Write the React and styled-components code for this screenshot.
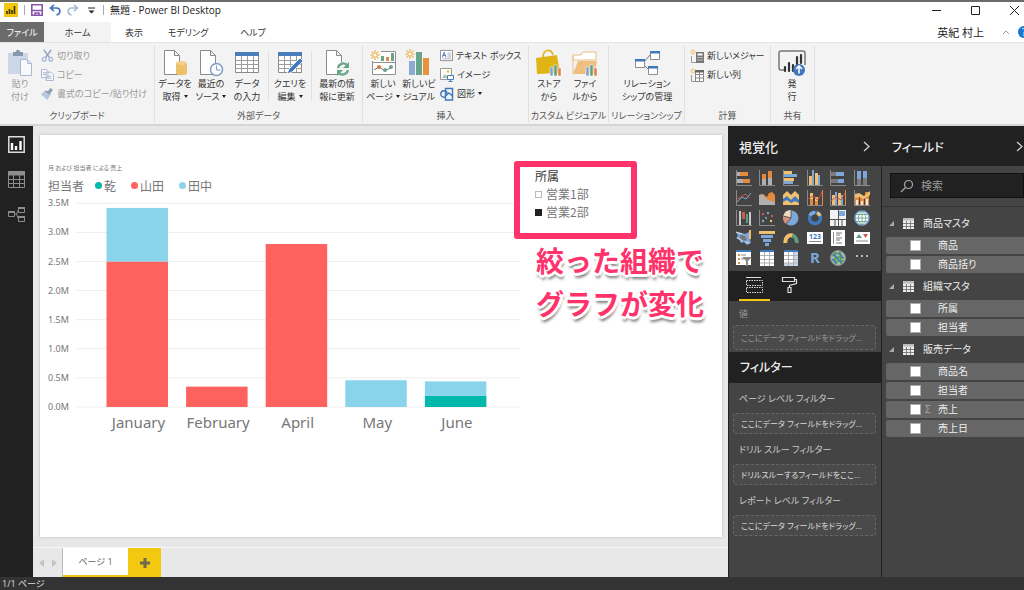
import React from 'react'
import styled, { createGlobalStyle } from 'styled-components'

const monthly = [
  { month: "January", inui: 0, yamada: 2.5, tanaka: 0.92 },
  { month: "February", inui: 0, yamada: 0.35, tanaka: 0 },
  { month: "April", inui: 0, yamada: 2.8, tanaka: 0 },
  { month: "May", inui: 0, yamada: 0, tanaka: 0.46 },
  { month: "June", inui: 0.19, yamada: 0, tanaka: 0.25 },
];

const series = [
  { key: "inui", name: "乾", color: "#01b8aa" },
  { key: "yamada", name: "山田", color: "#fd625e" },
  { key: "tanaka", name: "田中", color: "#8ad4eb" },
];

const tables = [
  { name: "商品マスタ", fields: [{ name: "商品" }, { name: "商品括り" }] },
  { name: "組織マスタ", fields: [{ name: "所属" }, { name: "担当者" }] },
  { name: "販売データ", fields: [{ name: "商品名" }, { name: "担当者" }, { name: "売上", sum: true }, { name: "売上日" }] },
];

const Svg = ({ w = 16, h = w, box, children }) => (
  <svg width={w} height={h} viewBox={box || `0 0 ${w} ${h}`} fill="none" aria-hidden="true">{children}</svg>
);

/* ---------- ribbon icons ---------- */
const Doc = ({ stroke = "#8a8a8a" }) => (
  <path d="M3.5 1.5h10l5 5v19h-15zM13.5 1.5v5h5" fill="#fff" stroke={stroke} />
);

const Sun = () => (
  <g stroke="#eeb75a" strokeWidth="1.2">
    <circle cx="5" cy="5" r="2.2" fill="#fff" />
    <path d="M5 0v2M5 8v2M0 5h2M8 5h2M1.5 1.5l1.4 1.4M7.1 7.1l1.4 1.4M8.5 1.5L7.1 2.9M1.5 8.5l1.4-1.4" />
  </g>
);

const PasteIcon = () => (
  <Svg w={28}>
    <path d="M2 4h20v21H2z" fill="#cdd7e8" />
    <path d="M7 7V3h3c0-3 4-3 4 0h3v4z" fill="#8797b0" />
    <path d="M14.500 10.500h7l4 4v12h-11zM21.500 10.500v4h4" fill="#f7f9fc" stroke="#a9b9d2" />
  </Svg>
);

const GetDataIcon = () => (
  <Svg w={28}>
    <Doc />
    <path d="M15 14v10c0 3 11 3 11 0V14z" fill="#eec06a" />
    <ellipse cx="20.500" cy="14" rx="5.500" ry="2" fill="#f4d08d" />
  </Svg>
);

const RecentIcon = () => (
  <Svg w={28}>
    <Doc />
    <circle cx="19.500" cy="20.500" r="6" fill="#fff" stroke="#7f9cc4" strokeWidth="1.500" />
    <path d="M19.500 16.500v4.500h4" stroke="#7f9cc4" />
  </Svg>
);

const GridIcon = ({ edit }) => (
  <Svg w={28}>
    <path d="M2.500 3.500h23v20h-23z" fill="#fff" stroke="#8a8a8a" />
    <path d="M2 3h24v4H2z" fill="#4a7ebb" />
    <path d="M2 11.500h24M2 15.500h24M2 19.500h24M8.500 7v16M14.500 7v16M20.500 7v16" stroke="#9c9c9c" />
    {edit && <path d="M11 25l2-5 11-11 3 3-11 11z" fill="#3f78bd" stroke="#fff" strokeWidth=".8" />}
  </Svg>
);

const RefreshIcon = () => (
  <Svg w={28}>
    <Doc />
    <circle cx="20" cy="20" r="7" fill="#f3f3f3" />
    <path d="M15 19c1-5 7-6 9.500-2.500M25 21c-1 5-7 6-9.500 2.500" stroke="#6aa58a" strokeWidth="2.200" />
    <path d="M26 13v6h-6zM14 27v-6h6z" fill="#6aa58a" />
  </Svg>
);

const NewPageIcon = () => (
  <Svg w={28}>
    <path d="M3.500 2.500h23v23h-23zM3.500 13.500h23" fill="#fff" stroke="#8f8f8f" />
    <path d="M12 7h3v5h-3zM22 4h3v8h-3z" fill="#6aa58a" />
    <path d="M17 8h3v4h-3z" fill="#e58a43" />
    <path d="M5 21l5-3 6 4 7-4" stroke="#777" />
    <circle cx="10" cy="18" r="2" fill="#e0703c" />
    <circle cx="16" cy="21" r="2" fill="#6aa58a" />
    <circle cx="22" cy="18" r="2" fill="#6aa58a" />
    <path d="M1 1h11v11H1z" fill="#f8f8f8" />
    <g transform="translate(1 1)"><Sun /></g>
  </Svg>
);

const NewVisualIcon = () => (
  <Svg w={28}>
    <path d="M4 12h6v14H4z" fill="#8cabd3" />
    <path d="M11 3h6v23h-6z" fill="#6aa58a" />
    <path d="M18 9h6v17h-6z" fill="#e8913f" />
    <Sun />
  </Svg>
);

const MiniBars = () => (
  <g>
    <path d="M15 18h3v9h-3z" fill="#7ba2d4" stroke="#fff" strokeWidth=".5" />
    <path d="M19 16h3v11h-3z" fill="#5f9c80" stroke="#fff" strokeWidth=".5" />
    <path d="M23 19h3v8h-3z" fill="#e0803c" stroke="#fff" strokeWidth=".5" />
  </g>
);

const StoreIcon = () => (
  <Svg w={28}>
    <path d="M8 9c0-9 8-10 10-3" stroke="#e0b51c" strokeWidth="1.600" />
    <path d="M1 9l21-3 3 18-23 1z" fill="#dfb515" />
    <MiniBars />
  </Svg>
);

const FolderIcon = () => (
  <Svg w={28}>
    <path d="M2 6h8l2-3h13v8H2z" fill="#fff" stroke="#e9bf83" />
    <path d="M2 25l5-13h19l-3 13z" fill="#eebf7e" />
    <path d="M2 7v18" stroke="#e9bf83" />
    <MiniBars />
  </Svg>
);

const RelationIcon = () => (
  <Svg w={28}>
    <path d="M11 13l6-7M11 16l6 6" stroke="#777" />
    <path d="M17.500 2.500h9v8h-9zM2.500 10.500h9v8h-9zM15.500 17.500h9v8h-9z" fill="#fff" stroke="#8c8c8c" />
    <path d="M17 2h10v2.500H17zM2 10h10v2.500H2zM15 17h10v2.500H15z" fill="#3f78bd" />
  </Svg>
);

const PublishIcon = () => (
  <Svg w={28}>
    <path d="M6 21H3c-1.500 0-2-1-2-2V4c0-1 .5-2 2-2h22c1.500 0 2 1 2 2v12" stroke="#777" strokeWidth="1.500" />
    <path d="M7 18v4M11 14v8M15 16v6M19 8v9M23 6v8" stroke="#333" strokeWidth="2.200" strokeLinecap="round" />
    <circle cx="21" cy="21" r="6" fill="#3f78bd" />
    <path d="M21 24.500v-7M18 20l3-3 3 3" stroke="#fff" strokeWidth="1.600" />
  </Svg>
);

const CutIcon = () => (
  <Svg w={13} box="0 0 14 14">
    <path d="M3 1l6 8M11 1L5 9" stroke="#8f9fb8" strokeWidth="1.600" />
    <circle cx="3.500" cy="11" r="2" stroke="#a9bddb" strokeWidth="1.500" />
    <circle cx="10.500" cy="11" r="2" stroke="#a9bddb" strokeWidth="1.500" />
  </Svg>
);

const CopyIcon = () => (
  <Svg w={13} box="0 0 14 14">
    <path d="M.5 1.500h5l2 2v7h-7zM5.500 4.500h5l3 3v6h-8z" fill="#f5f7fb" stroke="#a3b3cc" />
    <path d="M2 5h3M2 7h3M7 9h4M7 11h4" stroke="#a3b3cc" />
  </Svg>
);

const PainterIcon = () => (
  <Svg w={13} box="0 0 14 14">
    <path d="M10 1l3 2-3 4-3-2z" fill="#8f9fb8" />
    <path d="M4 4l6 5-3 5-7-6z" fill="#b7c7df" />
    <path d="M5 4l5 4" stroke="#8090ab" strokeWidth="1.500" />
  </Svg>
);

const TextBoxIcon = () => (
  <Svg w={13} box="0 0 14 14">
    <path d="M.5 1.500h13v11H.5z" fill="#fff" stroke="#8a8a8a" />
    <path d="M2.500 9l2-5.500L6.500 9M3 7h3" stroke="#3f78bd" />
    <path d="M8 4.500h4M8 6.500h4M8 8.500h4M3 10.500h9" stroke="#999" strokeWidth=".8" />
  </Svg>
);

const ImageIcon = () => (
  <Svg w={14} box="0 0 14 14">
    <path d="M.5.5h11v11H.5z" fill="#fff" stroke="#999" />
    <path d="M2 10l3-4 3 4z" fill="#a9c4a5" />
    <circle cx="8" cy="3.500" r="1.300" fill="#eeb75a" />
    <path d="M7.500 7.500h6v4h-6zM10.500 12v1.500M8.500 13.500h4" fill="#fff" stroke="#4a7ebb" />
  </Svg>
);

const ShapesIcon = () => (
  <Svg w={14} box="0 0 14 14">
    <path d="M5.500 1.500h7v7h-7z" stroke="#3f78bd" strokeWidth="1.400" />
    <circle cx="4" cy="7" r="3.200" stroke="#3f78bd" strokeWidth="1.400" />
    <path d="M9 6l3.500 3v4h-7V9z" fill="#f3f3f3" stroke="#3f78bd" strokeWidth="1.400" />
  </Svg>
);

const MeasureIcon = ({ column }) => (
  <Svg w={14}>
    <g transform="scale(.6)"><Sun /></g>
    <path d="M1.500 7v6.500h5" stroke="#999" />
    {column
      ? <g><path d="M5.500 2.500h8v11h-8zM5.500 6.500h8M5.500 10h8M9.500 4v9" fill="#fff" stroke="#888" /><path d="M5 2h9v2.500H5z" fill="#666" /></g>
      : <g><path d="M6 3h8v11H6z" fill="#777" /><path d="M7.500 4.500h5v2h-5zM7.500 8h1v1h-1zM9.500 8h1v1h-1zM11.500 8h1v1h-1zM7.500 10.500h1v1h-1zM9.500 10.500h1v1h-1zM11.500 10.500h1v1h-1z" fill="#fff" /></g>}
  </Svg>
);

/* ---------- visualization gallery ---------- */
const O = "#e58a3c", B = "#7da7d9", Y = "#f0c070", G = "#b0b0b0", A = "#8a8a8a";
const axis = <path d="M.5 0v15.500H16" stroke={A} />;

const visuals = [
  ["積み上げ横棒グラフ", <g>{axis}<path d="M1 2h5v4H1zM1 9h7v4H1z" fill={G} /><path d="M4 2h8v4H4zM7 9h7v4H7z" fill={O} /></g>],
  ["積み上げ縦棒グラフ", <g>{axis}<path d="M3 9h4v6H3zM9 8h4v7H9z" fill={G} /><path d="M3 4h4v5H3zM9 1h4v7H9z" fill={O} /></g>],
  ["集合横棒グラフ", <g>{axis}<path d="M1 1h8v3H1zM1 8h10v3H1z" fill={Y} /><path d="M1 4h13v3H1zM1 11h9v3H1z" fill={B} /></g>],
  ["集合縦棒グラフ", <g>{axis}<path d="M2 6h3v9H2zM8 3h3v12H8z" fill={Y} /><path d="M5 0h2v15H5zM11 5h2v10h-2z" fill={B} /></g>],
  ["100% 積み上げ横棒グラフ", <g>{axis}<path d="M1 2h5v4H1zM1 9h7v4H1z" fill="#7b7b7b" /><path d="M6 2h8v4H6zM8 9h6v4H8z" fill={B} /></g>],
  ["100% 積み上げ縦棒グラフ", <g>{axis}<path d="M3 9h4v6H3zM9 8h4v7H9z" fill="#7b7b7b" /><path d="M3 1h4v8H3zM9 1h4v7H9z" fill={B} /></g>],
  ["折れ線グラフ", <g>{axis}<path d="M1 12l5-5 4 2 5-6" stroke={B} /><path d="M1 9l4-2 4-3 5 4" stroke="#c75c4a" /></g>],
  ["面グラフ", <g><path d="M0 15V6l4-2 4 3 2-4 3-1 3 3v10z" fill={O} /><path d="M0 15V5l3-1 6 6 7 2v3z" fill={G} /></g>],
  ["積み上げ面グラフ", <g><path d="M0 15V5l4-4 4 4 4-4 4 4v10z" fill={Y} /><path d="M0 15V9l4-3 4 4 4-4 4 4v5z" fill="#3f78bd" /><path d="M0 15v-3l4-2 4 3 4-2 4 2v2z" fill={Y} /></g>],
  ["折れ線および積み上げ縦棒グラフ", <g>{axis}<path d="M3 3h3v12H3zM8 7h3v8H8z" fill={Y} /><path d="M3 9h3v6H3zM8 11h3v4H8z" fill={O} /><path d="M1 9l5-3 5 4 4-8" stroke="#d0503c" /><path d="M15.500 0v15" stroke={O} /></g>],
  ["折れ線および集合縦棒グラフ", <g>{axis}<path d="M2 5h3v10H2zM8 3h3v12H8z" fill={Y} /><path d="M5 2h2v13H5zM11 5h2v10h-2z" fill={B} /><path d="M1 11l5-4 5 3 4-7" stroke="#d0503c" /><path d="M15.500 0v15" stroke={O} /></g>],
  ["リボン グラフ", <g>{axis}<path d="M1 4h4v11H1zM6 6h4v9H6zM11 2h4v13h-4z" fill={O} /><path d="M1 4l4-1 5 3 6-5v4l-6 4-5-2-4 1z" fill={Y} /><path d="M2 10h2v5H2zM7 11h2v4H7zM12 9h2v6h-2z" fill="#e8e8e8" /></g>],
  ["ウォーターフォール図", <g>{axis}<path d="M3 1h2v14H3zM13 2h2v13h-2z" fill="#c9c9c9" /><path d="M6 2h3v7H6z" fill="#c75c4a" /><path d="M10 4h2v9h-2z" fill="#5f9c80" /></g>],
  ["散布図", <g>{axis}<circle cx="4" cy="4" r="1.200" fill="#c75c4a" /><circle cx="9" cy="3" r="1.200" fill={B} /><circle cx="7" cy="8" r="1.200" fill="#5f9c80" /><circle cx="13" cy="6" r="1.200" fill="#c75c4a" /><circle cx="12" cy="11" r="1.200" fill={Y} /><circle cx="4" cy="11" r="1.200" fill={B} /></g>],
  ["円グラフ", <g><circle cx="8" cy="8" r="7.500" fill={B} /><path d="M8 8V0a8 8 0 0 0-7.800 6z" fill="#f1dcc0" /><path d="M8 8L.2 6a8 8 0 0 0 3 8.300z" fill="#d98f7f" /><path d="M8 .5V8L3 14M8 8L.5 6" stroke="#444" strokeWidth=".8" /></g>],
  ["ドーナツ グラフ", <g strokeWidth="3.500"><circle cx="8" cy="8" r="5.500" stroke="#3f78bd" /><path d="M3 5.500A5.500 5.500 0 0 1 8 2.500" stroke={B} /><path d="M10 2.800a5.500 5.500 0 0 1 3 3" stroke={Y} /></g>],
  ["ツリーマップ", <g><path d="M0 0h16v16H0z" fill="#f2f2f2" /><path d="M9 1h6v5H9z" fill={B} /><path d="M8.500 0v16M0 9.500h16M5 10v6M12 10v6" stroke="#555" /></g>],
  ["マップ", <g><circle cx="8" cy="8" r="7" fill="#fff" stroke={B} strokeWidth="1.500" /><path d="M8 1v14M1 8h14M2.500 4.500h11M2.500 11.500h11M8 1C3 5 3 11 8 15M8 1c5 4 5 10 0 14" stroke="#5f9c80" strokeWidth=".8" /></g>],
  ["塗り分け地図", <g><path d="M0 2l6 1 3 1 4-2v4l2 1-1 3 1 3-4 2-3-3-3 1-2-4-3-1 2-2z" fill={B} /><path d="M4 5l5 1 2 4-4 1-3-3z" fill="#777" /><path d="M13 0h2v9h-2z" fill={Y} /><path d="M0 2l6 2M1 8l6 3M9 12l4 1" stroke="#ddd" /></g>],
  ["じょうご", <g fill={B}><path d="M0 1h16v3H0z" fill={Y} /><path d="M2 5h12v3H2zM4 9h8v3H4zM6 13h4v3H6z" /></g>],
  ["ゲージ", <g strokeWidth="4"><path d="M2.500 13a5.500 6.500 0 0 1 7-7.500" stroke={Y} /><path d="M9.500 5.500a6 6.500 0 0 1 4 7.500" stroke="#5f9c80" /></g>],
  ["カード", <g><path d="M0 2h16v12H0z" fill="#fff" /><text x="8" y="9" fontSize="7" fontWeight="700" textAnchor="middle" fill="#3f78bd">123</text><path d="M2 11.500h12" stroke={A} /></g>],
  ["複数の行カード", <g><path d="M1 0h14v16H1z" fill="#fff" /><path d="M3.500 2v12" stroke={A} /><path d="M6 3h6M6 5h4M6 8h6M6 10h4M6 13h6" stroke="#777" /></g>],
  ["KPI", <g><path d="M0 2h16v12H0z" fill="#fff" /><path d="M2 8l3-4 3 4z" fill="#5f9c80" /><path d="M9 4h5l-2.500 4z" fill="#c75c4a" /><path d="M2 11h12" stroke={A} /></g>],
  ["スライサー", <g><path d="M0 1h15v14H0z" fill="#fff" /><path d="M0 0h15v2H0z" fill="#3f78bd" /><path d="M2 4h2v2H2zM2 8h2v2H2zM2 12h2v2H2z" fill={O} /><path d="M5 5h5M5 9h3" stroke={A} /><path d="M6 7h10l-4 4v5h-2v-5z" fill="#888" /></g>],
  ["テーブル", <g><path d="M1 0h14v16H1z" fill="#fff" /><path d="M1 0h14v2H1z" fill="#3f78bd" /><path d="M1 5.500h14M1 9.500h14M1 13h14M5.500 2v14M10.500 2v14" stroke={G} /></g>],
  ["マトリックス", <g><path d="M1 0h14v16H1z" fill="#fff" /><path d="M1 0h14v2H1z" fill="#3f78bd" /><path d="M11 2h4v14h-4zM1 13h14v3H1z" fill="#c8d8ec" /><path d="M1 5.500h14M1 9.500h14M1 13h14M5.500 2v14M10.500 2v14" stroke={G} /></g>],
  ["R スクリプト ビジュアル", <text x="8" y="13" fontSize="15" fontWeight="700" textAnchor="middle" fill={B}>R</text>],
  ["ArcGIS Maps", <g><circle cx="8" cy="8" r="7.500" fill="#9dbfae" stroke="#8a8a8a" /><path d="M2 6l4-3 4 1M3 10l5-3 6 1M5 14l5-4 4 1M5 2l1 12M10 1l1 13" stroke="#5f9c50" strokeWidth="1.500" /><path d="M3 4l9 9M9 3l4 5M2 9l4 4" stroke="#3f78bd" strokeWidth="1.500" /></g>],
  ["カスタム ビジュアルのインポート", <path d="M2 6h2M7 6h2M12 6h2" stroke="#ddd" strokeWidth="1.600" />],
];

const BigButton = ({ icon, lines, arrow, width = 36, muted }) => (
  <Big $width={width} $muted={muted} type="button">
    {icon}
    <span>{lines[0]}</span>
    <span>{lines[1]}{arrow && <Arrow />}</span>
  </Big>
);

const RibbonGroup = ({ title, width, children }) => (
  <Group $width={width}>
    <GroupBody>{children}</GroupBody>
    <GroupTitle>{title}</GroupTitle>
  </Group>
);

const Header = () => (
  <header>
    <TitleBar>
      <Svg w={14}>
        <path d="M0 0h14v14H0z" fill="#f2c811" />
        <path d="M3 8v3M5.500 6v5M8 7v4M10.500 3v8" stroke="#3a3000" strokeWidth="1.600" />
      </Svg>
      <Rule />
      <QuickButton aria-label="保存">
        <Svg w={12}><path d="M.8.8h10.400v10.400H.8z" stroke="#8a55a8" strokeWidth="1.600" /><path d="M1 6.500h10M4 11V9h4v2" stroke="#8a55a8" strokeWidth="1.500" /></Svg>
      </QuickButton>
      <QuickButton aria-label="元に戻す">
        <Svg w={12}><path d="M1.500 4h6c4.500 0 4.500 6 0 7M5 .8L1.500 4 5 7.200" stroke="#3e73b8" strokeWidth="1.600" /></Svg>
      </QuickButton>
      <QuickButton aria-label="やり直し">
        <Svg w={12}><path d="M10.500 4h-6c-4.500 0-4.500 6 0 7M7 .8L10.500 4 7 7.200" stroke="#a9bcd6" strokeWidth="1.600" /></Svg>
      </QuickButton>
      <QuickButton aria-label="クイック アクセスのカスタマイズ">
        <Svg w={7}><path d="M0 1h7" stroke="#222" /><path d="M.5 3.500h6l-3 3z" fill="#222" /></Svg>
      </QuickButton>
      <Rule />
      <AppTitle>無題 - Power BI Desktop</AppTitle>
      <WindowButtons>
        <button type="button" aria-label="最小化"><Svg w={11}><path d="M1 5.500h9" stroke="#222" /></Svg></button>
        <button type="button" aria-label="最大化"><Svg w={11}><path d="M1.500 1.500h8v8h-8z" stroke="#222" /></Svg></button>
        <button type="button" aria-label="閉じる"><Svg w={11}><path d="M1 1l9 9M10 1l-9 9" stroke="#222" /></Svg></button>
      </WindowButtons>
    </TitleBar>
    <TabBar>
      <FileTab type="button">ファイル</FileTab>
      <Tab $active $width={67} type="button">ホーム</Tab>
      <Tab $width={46} type="button">表示</Tab>
      <Tab $width={62} type="button">モデリング</Tab>
      <Tab $width={68} type="button">ヘルプ</Tab>
      <User>
        英紀 村上
        <Svg w={8} h={6}><path d="M1 5l3-3 3 3" stroke="#999" /></Svg>
        <Help type="button" aria-label="ヘルプ">?</Help>
      </User>
    </TabBar>
    <Ribbon>
      <RibbonGroup title="クリップボード" width={155}>
        <BigButton icon={<PasteIcon />} lines={["貼り", "付け"]} muted />
        <SmallList>
          <Small type="button" $muted><CutIcon />切り取り</Small>
          <Small type="button" $muted><CopyIcon />コピー</Small>
          <Small type="button" $muted><PainterIcon />書式のコピー/貼り付け</Small>
        </SmallList>
      </RibbonGroup>
      <RibbonGroup title="外部データ" width={208}>
        <BigButton icon={<GetDataIcon />} lines={["データを", "取得"]} arrow />
        <BigButton icon={<RecentIcon />} lines={["最近の", "ソース"]} arrow />
        <BigButton icon={<GridIcon />} lines={["データ", "の入力"]} />
        <Divider />
        <BigButton icon={<GridIcon edit />} lines={["クエリを", "編集"]} arrow />
        <Divider />
        <BigButton icon={<RefreshIcon />} lines={["最新の情", "報に更新"]} width={44} />
      </RibbonGroup>
      <RibbonGroup title="挿入" width={166}>
        <BigButton icon={<NewPageIcon />} lines={["新しい", "ページ"]} arrow />
        <BigButton icon={<NewVisualIcon />} lines={["新しいビ", "ジュアル"]} />
        <SmallList>
          <Small type="button"><TextBoxIcon />テキスト ボックス</Small>
          <Small type="button"><ImageIcon />イメージ</Small>
          <Small type="button"><ShapesIcon />図形<Arrow $tight /></Small>
        </SmallList>
      </RibbonGroup>
      <RibbonGroup title="カスタム ビジュアル" width={80}>
        <BigButton icon={<StoreIcon />} lines={["ストア", "から"]} />
        <BigButton icon={<FolderIcon />} lines={["ファイ", "ルから"]} />
      </RibbonGroup>
      <RibbonGroup title="リレーションシップ" width={76}>
        <BigButton icon={<RelationIcon />} lines={["リレーション", "シップの管理"]} width={72} />
      </RibbonGroup>
      <RibbonGroup title="計算" width={86}>
        <SmallList>
          <Small type="button"><MeasureIcon />新しいメジャー</Small>
          <Small type="button"><MeasureIcon column />新しい列</Small>
        </SmallList>
      </RibbonGroup>
      <RibbonGroup title="共有" width={44}>
        <BigButton icon={<PublishIcon />} lines={["発", "行"]} width={38} />
      </RibbonGroup>
    </Ribbon>
  </header>
);

const Chart = () => {
  const zero = 211;
  const unit = 58.2;
  const ticks = [0, 0.5, 1, 1.5, 2, 2.5, 3, 3.5];
  return (
    <ChartSvg viewBox="0 0 472 242" role="img" aria-label="月 および 担当者 による 売上">
      {ticks.map((t) => (
        <g key={t}>
          <path d={`M28 ${zero - t * unit}H472`} stroke="#eeeeee" />
          <text x="0" y={zero - t * unit + 3} fontSize="9" fill="#777">{t.toFixed(1)}M</text>
        </g>
      ))}
      {monthly.map((m, i) => {
        const x = 58.5 + i * 79.6;
        let top = zero;
        return (
          <g key={m.month}>
            {series.map((s) => {
              const height = m[s.key] * unit;
              top -= height;
              return <rect key={s.key} x={x} y={top} width="61.5" height={height} fill={s.color} />;
            })}
            <text x={x + 32} y={zero + 21} fontSize="15" textAnchor="middle" fill="#777">{m.month}</text>
          </g>
        );
      })}
    </ChartSvg>
  );
};

const Report = () => (
  <Canvas>
    <Page>
      <ChartVisual>
        <ChartTitle>月 および 担当者 による 売上</ChartTitle>
        <Legend>
          <dt>担当者</dt>
          {series.map((s) => <LegendItem key={s.key} $color={s.color}>{s.name}</LegendItem>)}
        </Legend>
        <Chart />
      </ChartVisual>
      <Side>
        <Slicer>
          <legend>所属</legend>
          <label><input type="checkbox" />営業1部</label>
          <label><input type="checkbox" defaultChecked />営業2部</label>
        </Slicer>
        <Callout>絞った組織で<br />グラフが変化</Callout>
      </Side>
    </Page>
    <PageTabs>
      <PageArrows>
        <button type="button" aria-label="前のページ"><Svg w={5} h={8}><path d="M5 0v8L0 4z" fill="#c3c3c3" /></Svg></button>
        <button type="button" aria-label="次のページ"><Svg w={5} h={8}><path d="M0 0v8l5-4z" fill="#c3c3c3" /></Svg></button>
      </PageArrows>
      <PageTab type="button">ページ 1</PageTab>
      <AddPage type="button" aria-label="新しいページ"><Svg w={10}><path d="M5 0v10M0 5h10" stroke="#6f6a4c" strokeWidth="3" /></Svg></AddPage>
    </PageTabs>
  </Canvas>
);

const Chevron = () => <Svg w={7} h={11}><path d="M1 1l5 4.500L1 10" stroke="#d0d0d0" strokeWidth="1.300" /></Svg>;

const VisualPane = () => (
  <Pane>
    <PaneHeader><h2>視覚化</h2><PaneToggle type="button" aria-label="折りたたむ"><Chevron /></PaneToggle></PaneHeader>
    <Gallery>
      {visuals.map(([name, art]) => (
        <button key={name} type="button" aria-label={name}><Svg w={16}>{art}</Svg></button>
      ))}
    </Gallery>
    <PaneTabs>
      <PaneTab $active type="button" aria-label="フィールド">
        <Svg w={19} h={18}>
          <path d="M1 1.500h15" stroke="#ddd" />
          <path d="M1.500 4.500h16v5h-16zM1.500 11.500h16v5h-16z" stroke="#ddd" strokeDasharray="1.500 1" />
        </Svg>
      </PaneTab>
      <PaneTab type="button" aria-label="書式">
        <Svg w={17} h={18}><path d="M1.500 1.500h12v4h-12zM13.500 3.500h2v4l-7 2v2M7 11.500h3v5H7z" stroke="#ddd" strokeWidth="1.200" /></Svg>
      </PaneTab>
    </PaneTabs>
    <Well>
      <WellLabel $muted>値</WellLabel>
      <Drop $muted>ここにデータ フィールドをドラッグ...</Drop>
    </Well>
    <FilterHeader>フィルター</FilterHeader>
    <Well>
      <WellLabel>ページ レベル フィルター</WellLabel>
      <Drop>ここにデータ フィールドをドラッグ...</Drop>
      <WellLabel>ドリル スルー フィルター</WellLabel>
      <Drop>ドリルスルーするフィールドをここ...</Drop>
      <WellLabel>レポート レベル フィルター</WellLabel>
      <Drop>ここにデータ フィールドをドラッグ...</Drop>
    </Well>
  </Pane>
);

const FieldPane = () => (
  <Pane>
    <PaneHeader $end><h2>フィールド</h2><PaneToggle type="button" aria-label="折りたたむ"><Chevron /></PaneToggle></PaneHeader>
    <SearchArea>
      <Search>
        <Svg w={14}><circle cx="8.500" cy="5.500" r="4" stroke="#aaa" strokeWidth="1.200" /><path d="M5.500 8.500L1 13" stroke="#aaa" strokeWidth="1.200" /></Svg>
        <input type="search" aria-label="検索" placeholder="検索" />
      </Search>
    </SearchArea>
    <Tables>
      {tables.map((t) => (
        <li key={t.name}>
          <TableName type="button">
            <Svg w={5}><path d="M5 0v5H0z" fill="#aaa" /></Svg>
            <Svg w={11}><path d="M0 0h11v11H0z" fill="#eee" /><path d="M0 0h11v2.500H0z" fill="#bbb" /><path d="M0 5.500h11M0 8.500h11M3.500 3v8M7.500 3v8" stroke="#666" strokeWidth=".8" /></Svg>
            {t.name}
          </TableName>
          <Fields>
            {t.fields.map((f) => (
              <Field key={f.name}>
                <label>
                  <input type="checkbox" />
                  <Sigma>{f.sum && "Σ"}</Sigma>
                  {f.name}
                </label>
              </Field>
            ))}
          </Fields>
        </li>
      ))}
    </Tables>
  </Pane>
);

const App = () => {
  return <Shell>
    <GlobalStyle />
    <Header />
    <Work>
      <Rail>
        <button type="button" aria-label="レポート"><Svg w={17}><path d="M.8.8h15.400v15.400H.8z" stroke="#ddd" strokeWidth="1.500" /><path d="M4 7v7M8 10v4M12.500 5v9" stroke="#fff" strokeWidth="2.400" /></Svg></button>
        <button type="button" aria-label="データ"><Svg w={17}><path d="M.5.5h16v16H.5zM.5 8.500h16M.5 12.500h16M5.500 4v12M11.500 4v12" stroke="#8d8d8d" /><path d="M0 0h17v4.500H0z" fill="#8d8d8d" /></Svg></button>
        <button type="button" aria-label="リレーションシップ"><Svg w={17}><path d="M.5 5.500h6v5h-6zM10.500 1.500h6v5h-6zM10.500 10.500h6v5h-6zM6.500 8h2M8.500 8l2-4M8.500 8l2 5" stroke="#8d8d8d" /><path d="M0 5h7v2H0zM10 1h7v2h-7zM10 10h7v2h-7z" fill="#8d8d8d" /></Svg></button>
      </Rail>
      <Report />
      <VisualPane />
      <FieldPane />
    </Work>
    <Status>1/1 ページ</Status>
  </Shell>
};

const GlobalStyle = createGlobalStyle`
  * { box-sizing: border-box; }
  body {
    margin: 0;
    font-family: "Open Sans", "Noto Sans CJK JP", sans-serif;
    font-feature-settings: "palt";
    font-size: 9px;
    line-height: 13px;
  }
  button {
    padding: 0;
    border: 0;
    background: none;
    color: inherit;
    font: inherit;
    font-feature-settings: inherit;
    white-space: nowrap;
  }
  svg { display: block; flex: none; }
  h2, dl, ul, p { margin: 0; padding: 0; list-style: none; }
`;

const Shell = styled.div`
  display: flex;
  flex-direction: column;
  min-height: 100vh;
  overflow: hidden;
  border-top: 2px solid #6d6a6a;
  background: #fff;
  color: #333;
`;

const TitleBar = styled.div`
  display: flex;
  align-items: center;
  gap: 6px;
  height: 16px;
  padding-left: 4px;
`;

const Rule = styled.span`
  width: 1px;
  height: 10px;
  background: #aaa;
`;

const QuickButton = styled.button.attrs({ type: "button" })`
  display: flex;
  justify-content: center;
  min-width: 12px;
`;

const AppTitle = styled.span`
  font-size: 10px;
  color: #222;
`;

const WindowButtons = styled.div`
  display: flex;
  gap: 28px;
  margin-left: auto;
  padding-right: 4px;
`;

const TabBar = styled.nav`
  display: flex;
  align-items: stretch;
  height: 24px;
  padding-top: 4px;
  font-size: 9px;
`;

const FileTab = styled.button`
  width: 44px;
  background: #6b6b6b;
  color: #fff;
`;

const Tab = styled.button`
  width: ${(p) => p.$width}px;
  background: ${(p) => (p.$active ? "#f3f3f3" : "transparent")};
`;

const User = styled.div`
  display: flex;
  align-items: center;
  margin-left: auto;
  overflow: hidden;
  font-size: 11px;
  color: #222;

  svg { margin: 0 8px 0 18px; }
`;

const Help = styled.button`
  width: 12px;
  height: 12px;
  margin-right: -6px;
  border-radius: 50%;
  background: #1976d2;
  color: #fff;
  line-height: 12px;
`;

const Ribbon = styled.div`
  display: flex;
  height: 84px;
  padding: 3px 0 2px;
  border-top: 1px solid #e2e2e2;
  border-bottom: 2px solid #d5d5d5;
  background: #f3f3f3;
`;

const Group = styled.section`
  display: flex;
  flex-direction: column;
  flex: none;
  width: ${(p) => p.$width}px;
  border-right: 1px solid #e0e0e0;
`;

const GroupBody = styled.div`
  display: flex;
  align-items: flex-start;
  flex: 1;
  padding: 3px 0 0 2px;
`;

const GroupTitle = styled.div`
  display: flex;
  justify-content: center;
  color: #555;
  white-space: nowrap;
`;

const Big = styled.button`
  display: flex;
  flex-direction: column;
  align-items: center;
  width: ${(p) => p.$width}px;
  color: ${(p) => (p.$muted ? "#999" : "#333")};

  span { display: flex; align-items: center; }
`;

const SmallList = styled.div`
  display: flex;
  flex-direction: column;
  padding-left: 3px;
`;

const Small = styled.button`
  display: flex;
  align-items: center;
  gap: 3px;
  height: 19px;
  color: ${(p) => (p.$muted ? "#999" : "#333")};

  &:first-child { height: 13px; margin-bottom: 3px; }
`;

const Arrow = styled.i`
  margin-left: ${(p) => (p.$tight ? 0 : 3)}px;
  border: 2px solid transparent;
  border-top: 3px solid #222;
  border-bottom: 0;
`;

const Divider = styled.span`
  align-self: stretch;
  flex: none;
  width: 1px;
  margin: 2px 3px 8px;
  background: #e0e0e0;
`;

const Work = styled.main`
  display: grid;
  grid-template-columns: 33px minmax(0, 1fr) 153px 143px;
  flex: 1;
  background: #212121;
`;

const Rail = styled.nav`
  display: flex;
  flex-direction: column;
  align-items: center;
  gap: 18px;
  padding-top: 10px;
  background: #212121;
`;

const Canvas = styled.section`
  display: flex;
  flex-direction: column;
  min-width: 0;
  background: #e8e8e8;
`;

const Page = styled.div`
  display: flex;
  align-items: flex-start;
  flex: 1;
  margin: 9px 6px 10px 7px;
  padding: 26px 8px;
  background: #fff;
  box-shadow: 0 0 3px #bbb;
`;

const ChartVisual = styled.article`
  flex: 0 1 472px;
  min-width: 0;
  font-family: "Noto Sans CJK JP", sans-serif;
  color: #777;
`;

const ChartTitle = styled.p`
  font-size: 6px;
`;

const Legend = styled.dl`
  display: flex;
  align-items: center;
  height: 22px;
  font-size: 12px;
  gap: 8px;

  dt { margin-right: 3px; }
`;

const LegendItem = styled.dd`
  display: flex;
  align-items: center;
  gap: 2px;
  margin: 0 7px 0 0;

  &::before {
    content: "";
    width: 7px;
    height: 7px;
    border-radius: 50%;
    background: ${(p) => p.$color};
  }
`;

const ChartSvg = styled.svg`
  width: 100%;
  height: auto;
  font-family: "Noto Sans", sans-serif;
`;

const Side = styled.aside`
  flex: none;
  margin-left: -6px;
  font-family: "Noto Sans CJK JP", sans-serif;
`;

const Slicer = styled.fieldset`
  display: flex;
  flex-direction: column;
  width: 123px;
  height: 78px;
  margin: 0;
  padding: 0 0 0 15px;
  border: 6px solid #ff336b;
  border-radius: 3px;
  font-size: 12px;
  color: #777;

  legend {
    float: left;
    padding: 0;
    line-height: 18px;
    color: #333;
  }
  label {
    display: flex;
    align-items: center;
    gap: 4px;
    line-height: 18px;
  }
  input {
    appearance: none;
    width: 7px;
    height: 7px;
    margin: 0;
    border: 1px solid #bbb;
  }
  input:checked { border-color: #222; background: #222; }
`;

const Callout = styled.p`
  padding-left: 22px;
  font-size: 28px;
  font-weight: 700;
  line-height: 43px;
  font-feature-settings: normal;
  white-space: nowrap;
  color: #ff336b;
  text-shadow: 3px 0 #fff, -3px 0 #fff, 0 3px #fff, 0 -3px #fff, 2px 2px #fff, -2px 2px #fff, 1px 5px 3px #777;
`;

const PageTabs = styled.nav`
  display: flex;
  height: 30px;
  border-top: 1px solid #f6f6f6;
`;

const PageArrows = styled.div`
  display: flex;
  align-items: center;
  justify-content: center;
  gap: 8px;
  width: 30px;
  border-right: 1px solid #bbb;
`;

const PageTab = styled.button`
  width: 65px;
  border-bottom: 2px solid #f2c811;
  background: #fff;
  color: #666;
`;

const AddPage = styled.button`
  display: grid;
  place-items: center;
  width: 33px;
  background: #f2c811;
`;

const Pane = styled.section`
  min-width: 0;
  overflow: hidden;
  border-left: 1px solid #212121;
  background: #444;
  color: #ddd;
`;

const PaneHeader = styled.header`
  display: flex;
  align-items: center;
  justify-content: space-between;
  height: 40px;
  padding: 0 ${(p) => (p.$end ? 1 : 11)}px 0 10px;
  background: #212121;

  h2 {
    font-size: ${(p) => (p.$end ? 12 : 13)}px;
    font-weight: 500;
    font-family: "Noto Sans CJK JP", sans-serif;
    color: #eee;
  }
`;

const PaneToggle = styled.button`
  display: flex;
`;

const Gallery = styled.div`
  display: grid;
  grid-template-columns: repeat(6, 1fr);
  row-gap: 4px;
  padding: 4px 7px 5px 3px;
  background: #444;

  button { display: grid; place-items: center; }
`;

const PaneTabs = styled.div`
  display: flex;
  height: 30px;
  padding-left: 10px;
  background: #212121;
`;

const PaneTab = styled.button`
  display: grid;
  place-items: center;
  width: 31px;
  margin-right: 4px;
  border-bottom: 2px solid ${(p) => (p.$active ? "#f2c811" : "transparent")};
`;

const Well = styled.div`
  padding: 0 5px 2px 4px;
`;

const WellLabel = styled.p`
  padding: ${(p) => (p.$muted ? "6px 0 5px 6px" : "9px 0 8px 6px")};
  color: ${(p) => (p.$muted ? "#999" : "#ccc")};
`;

const Drop = styled.p`
  padding: ${(p) => (p.$muted ? 5 : 3)}px 7px;
  border: 1px dashed #666;
  border-radius: 3px;
  background: #4a4a4a;
  color: ${(p) => (p.$muted ? "#999" : "#ddd")};
  font-size: 8px;
  white-space: nowrap;
`;

const FilterHeader = styled.h2`
  padding: 8px 11px;
  background: #212121;
  font-size: 12px;
  font-weight: 500;
  line-height: 15px;
  color: #eee;
`;

const SearchArea = styled.div`
  padding: 7px 0 8px 8px;
  border-bottom: 1px solid #333;
`;

const Search = styled.label`
  display: flex;
  align-items: center;
  height: 25px;
  padding-left: 9px;
  gap: 7px;
  border: 1px solid #111;
  background: #212121;

  input {
    width: 100%;
    min-width: 0;
    padding: 0;
    border: 0;
    outline: 0;
    background: none;
    color: #ddd;
    font: inherit;
    font-size: 11px;
  }
  input::placeholder { color: #999; }
`;

const Tables = styled.ul`
  padding: 3px 0 0 4px;
`;

const TableName = styled.button`
  display: flex;
  align-items: center;
  gap: 9px;
  width: 100%;
  height: 27px;
  padding-left: 3px;
  font-size: 10px;
  color: #eee;
`;

const Fields = styled.ul`
  display: grid;
  row-gap: 2px;
`;

const Field = styled.li`
  border-radius: 2px 0 0 2px;
  background: #666;
  font-size: 10px;
  line-height: 17px;
  color: #eee;

  label { display: flex; align-items: center; }
  input {
    appearance: none;
    width: 11px;
    height: 11px;
    margin: 0 0 0 24px;
    border: 1px solid #aaa;
    background: #fff;
  }
`;

const Sigma = styled.span`
  width: 17px;
  padding-left: 4px;
  color: #aaa;
`;

const Status = styled.footer`
  height: 13px;
  padding-left: 2px;
  background: #333;
  color: #ddd;
`;

export default App;
